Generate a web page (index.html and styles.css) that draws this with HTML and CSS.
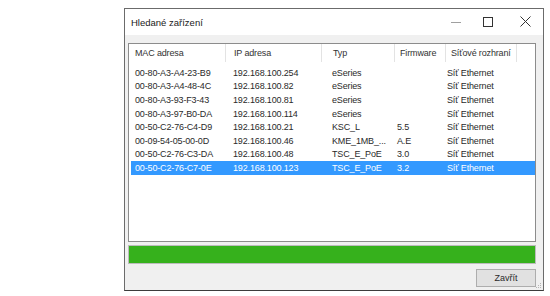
FILE: index.html
```html
<!DOCTYPE html>
<html lang="cs">
<head>
    <meta charset="utf-8">
    <title>Hledané zařízení</title>
    <link rel="stylesheet" href="styles.css">
</head>
<body>
    <div class="window">
        <div class="titlebar">
            <div class="title">Hledané zařízení</div>
            <div class="caption-buttons">
                <div class="cap-btn min">
                    <svg width="12" height="10" viewBox="0 0 12 10"><line x1="1" y1="5.5" x2="11" y2="5.5" stroke="#a0a0a0" stroke-width="1"/></svg>
                </div>
                <div class="cap-btn max">
                    <svg width="10" height="10" viewBox="0 0 10 10"><rect x="0.5" y="0.5" width="9" height="9" fill="none" stroke="#333" stroke-width="1"/></svg>
                </div>
                <div class="cap-btn close">
                    <svg width="11" height="11" viewBox="0 0 11 11"><path d="M0.5 0.5 L10.5 10.5 M10.5 0.5 L0.5 10.5" stroke="#333" stroke-width="1"/></svg>
                </div>
            </div>
        </div>
        <div class="content">
            <div class="listview">
                <div class="lv-header">
                    <div class="hcell c1">MAC adresa</div>
                    <div class="hcell c2">IP adresa</div>
                    <div class="hcell c3">Typ</div>
                    <div class="hcell c4">Firmware</div>
                    <div class="hcell c5">Síťové rozhraní</div>
                </div>
                <div class="lv-rows">
                    <div class="row"><span>00-80-A3-A4-23-B9</span><span>192.168.100.254</span><span>eSeries</span><span></span><span>Síť Ethernet</span></div>
                    <div class="row"><span>00-80-A3-A4-48-4C</span><span>192.168.100.82</span><span>eSeries</span><span></span><span>Síť Ethernet</span></div>
                    <div class="row"><span>00-80-A3-93-F3-43</span><span>192.168.100.81</span><span>eSeries</span><span></span><span>Síť Ethernet</span></div>
                    <div class="row"><span>00-80-A3-97-B0-DA</span><span>192.168.100.114</span><span>eSeries</span><span></span><span>Síť Ethernet</span></div>
                    <div class="row"><span>00-50-C2-76-C4-D9</span><span>192.168.100.21</span><span>KSC_L</span><span>5.5</span><span>Síť Ethernet</span></div>
                    <div class="row"><span>00-09-54-05-00-0D</span><span>192.168.100.46</span><span>KME_1MB_...</span><span>A.E</span><span>Síť Ethernet</span></div>
                    <div class="row"><span>00-50-C2-76-C3-DA</span><span>192.168.100.48</span><span>TSC_E_PoE</span><span>3.0</span><span>Síť Ethernet</span></div>
                    <div class="row selected"><span>00-50-C2-76-C7-0E</span><span>192.168.100.123</span><span>TSC_E_PoE</span><span>3.2</span><span>Síť Ethernet</span></div>
                </div>
            </div>
            <div class="progress"><div class="progress-fill"></div></div>
            <div class="button-row">
                <div class="button">Zavřít</div>
            </div>
        </div>
        <div class="grip">
            <svg width="6" height="6" viewBox="0 0 6 6" fill="#b5b5b5"><rect x="4" y="0" width="1" height="1"/><rect x="2" y="2" width="1" height="1"/><rect x="4" y="2" width="1" height="1"/><rect x="0" y="4" width="1" height="1"/><rect x="2" y="4" width="1" height="1"/><rect x="4" y="4" width="1" height="1"/></svg>
        </div>
    </div>
</body>
</html>
```

FILE: styles.css
```css
body {
    margin: 0;
    background-color: #ffffff;
    font-family: 'Liberation Sans', Arial, sans-serif;
    color: #2a2a2a;
}

.window {
    position: relative;
    margin: 8px 0 0 124px;
    width: 418px;
    height: 281px;
    border: 1px solid #6b6b6b;
    border-bottom-color: #3c3c3c;
    background-color: #f0f0f0;
    display: flex;
    flex-direction: column;
}

.titlebar {
    height: 26px;
    background-color: #ffffff;
    display: flex;
    align-items: center;
    justify-content: space-between;
}

.title {
    padding-left: 6px;
    font-size: 9.5px;
    color: #1a1a1a;
}

.caption-buttons {
    display: flex;
    height: 100%;
}

.cap-btn {
    display: flex;
    align-items: center;
    justify-content: center;
    padding-bottom: 1px;
}
.cap-btn.min { width: 26px; }
.cap-btn.max { width: 38px; }
.cap-btn.close { width: 36px; }

.content {
    flex: 1;
    display: flex;
    flex-direction: column;
    padding: 8px 7px 0 3px;
}

.listview {
    height: 197px;
    background-color: #ffffff;
    border: 1px solid #8c8c8c;
    font-size: 9px;
    letter-spacing: -0.15px;
}

.lv-header {
    display: flex;
    height: 18px;
    align-items: stretch;
}

.hcell {
    display: flex;
    align-items: center;
    border-right: 1px solid #e3e3e3;
    color: #333;
    white-space: nowrap;
}
.c1 { width: 90px; padding-left: 6px; }
.c2 { width: 87px; padding-left: 8px; }
.c3 { width: 61px; padding-left: 11px; }
.c4 { width: 45px; padding-left: 5px; }
.c5 { width: 65px; padding-left: 5px; }

.lv-rows {
    padding: 4px 0 0 2px;
}

.row {
    display: grid;
    grid-template-columns: 98px 99px 65px 50px 79px;
    height: 13.6px;
    align-items: center;
    white-space: nowrap;
}
.row span {
    padding-left: 4px;
}
.row.selected {
    background-color: #3399ff;
    color: #ffffff;
}

.progress {
    margin-top: 3px;
    height: 19px;
    border: 1px solid #bcbcbc;
    background-color: #e6e6e6;
    box-sizing: border-box;
}
.progress-fill {
    height: 100%;
    width: 100%;
    background-color: #36b11c;
}

.button-row {
    display: flex;
    justify-content: flex-end;
    margin-top: 5px;
}

.button {
    width: 58px;
    height: 16px;
    border: 1px solid #adadad;
    background-color: #e1e1e1;
    font-size: 9px;
    display: flex;
    align-items: center;
    justify-content: center;
}

.grip {
    position: absolute;
    right: 1px;
    bottom: 1px;
    line-height: 0;
}
```
